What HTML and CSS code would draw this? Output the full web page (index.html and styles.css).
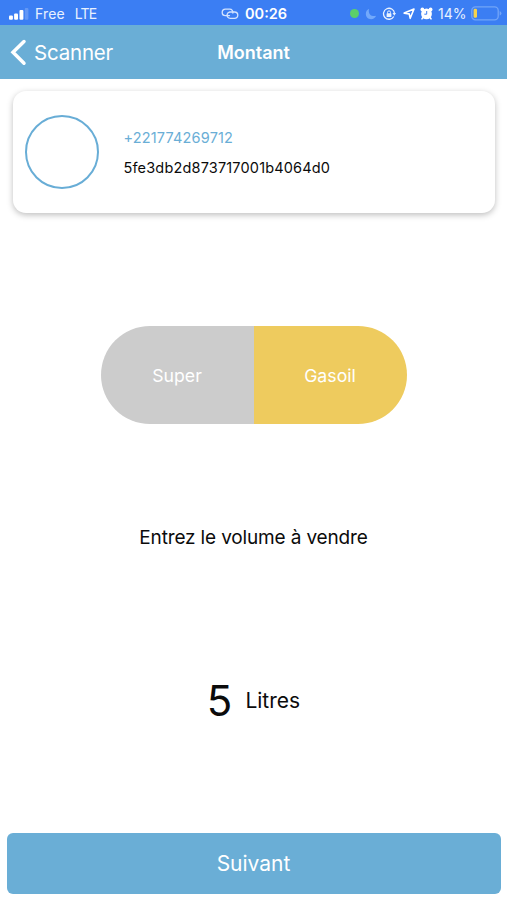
FILE: index.html
```html
<!DOCTYPE html>
<html lang="fr">
<head>
<meta charset="utf-8">
<title>Montant</title>
<link rel="stylesheet" href="styles.css">
</head>
<body>
<div class="screen">
  <div class="status">
    <div class="status-left">
      <svg class="signal" width="21" height="14" viewBox="0 0 21 14" fill="#fff"><rect x="1" y="8.500" width="3.900" height="4.200" rx="1"/><rect x="6.100" y="6.500" width="3.900" height="6.200" rx="1"/><rect x="11.500" y="3" width="3.900" height="9.700" rx="1"/><rect x="16.800" y="1" width="3.600" height="11.700" rx="1" opacity=".2"/></svg>
      <span class="carrier">Free</span><span class="network">LTE</span>
    </div>
    <div class="status-mid">
      <svg width="18" height="12" viewBox="0 0 18 12" fill="none" stroke="#d2e3ff" stroke-width="1.300" stroke-linecap="round"><path d="M8.500 7.600H4.400A3.200 3.200 0 0 1 4.400 1.200H8.800A3.200 3.200 0 0 1 11.900 5"/><path d="M9.500 4H13.600A3.200 3.200 0 0 1 13.600 10.400H9.200A3.200 3.200 0 0 1 6.100 6.500Q6.600 4.300 8.800 4"/></svg>
      <span class="time">00:26</span>
    </div>
    <div class="status-right">
      <span class="dot"></span>
      <svg class="moon" width="12" height="12" viewBox="0 0 12 12"><path d="M4.100.8C-.2 2.600-.2 9 3.800 10.800c3 1.300 6.100-.1 7.300-3C6.500 9.200 2.600 5.700 4.100.8Z" fill="#72a9fb"/></svg>
      <svg class="lock" width="14" height="14" viewBox="0 0 14 14" fill="none" stroke="#eaf3ff" stroke-width="1.300"><path d="M11.800 9.500A5.500 5.500 0 1 1 12.500 6.200"/><path d="M10.500 6.100h3.500L12.300 8.700Z" fill="#eaf3ff" stroke="none"/><rect x="4.600" y="6.300" width="4.800" height="3.700" rx=".6" fill="#eaf3ff" stroke="none"/><path d="M5.500 6.500V5.400a1.500 1.500 0 0 1 3 0v1.100" stroke-width="1"/></svg>
      <svg class="arrow" width="12" height="12" viewBox="0 0 12 12" fill="none" stroke="#fff" stroke-width="1.600" stroke-linejoin="round"><path d="M11 1 7.200 10.300 6.200 5.900 1.200 5.100Z"/></svg>
      <svg class="alarm" width="13" height="13" viewBox="0 0 13 13"><circle cx="2.400" cy="2.500" r="1.900" fill="#fff"/><circle cx="10.600" cy="2.500" r="1.900" fill="#fff"/><path d="m3 10.500-1 1.300M10 10.500l1 1.300" stroke="#fff" stroke-width="1.600" stroke-linecap="round"/><circle cx="6.500" cy="6.900" r="5.400" fill="#fff"/><path d="M6.700 4V7.200H4.300" fill="none" stroke="#3d7ff3" stroke-width="1"/></svg>
      <span class="percent">14%</span>
      <svg class="battery" width="31" height="15" viewBox="0 0 31 15"><rect x=".8" y=".8" width="26.400" height="13" rx="3.600" fill="none" stroke="#72a5f8" stroke-width="1.300"/><path d="M28.700 5v4.600q1.700-.7 1.700-2.300T28.700 5Z" fill="#72a5f8"/><rect x="2.600" y="2.800" width="3.400" height="9" rx="1.300" fill="#f6d34c"/></svg>
    </div>
  </div>
  <header class="nav">
    <div class="back">
      <svg width="17" height="27" viewBox="0 0 17 27" fill="none" stroke="#fff" stroke-width="3.500" stroke-linecap="round" stroke-linejoin="miter"><path d="M14 2.500 3 13.300 14 24.200"/></svg>
      <span>Scanner</span>
    </div>
    <h1>Montant</h1>
  </header>
  <main>
    <section class="card">
      <div class="avatar"></div>
      <div class="info">
        <span class="phone">+221774269712</span>
        <span class="ident">5fe3db2d873717001b4064d0</span>
      </div>
    </section>
    <div class="toggle">
      <div class="option"><span>Super</span></div>
      <div class="option active"><span>Gasoil</span></div>
    </div>
    <p class="prompt"><span>Entrez le volume à vendre</span></p>
    <div class="amount"><span class="value">5</span><span class="unit">Litres</span></div>
  </main>
  <div class="next"><span>Suivant</span></div>
</div>
</body>
</html>
```
FILE: styles.css
```css
* { box-sizing: border-box; }
body { margin: 0; background: #fff; color: #0b0b0b; font-family: Inter, "Liberation Sans", sans-serif; }
svg { display: block; flex: none; }
span { white-space: nowrap; }
.screen { width: 507px; height: 900px; display: flex; flex-direction: column; overflow: hidden; }
.status { height: 25px; background: #3b7ef3; color: #e8f1ff; display: grid; grid-template-columns: 221px 1fr 158px; align-items: center; padding-top: 2px; line-height: 18px; }
.status-left, .status-mid, .status-right { display: flex; align-items: center; }
.status-left { padding-left: 8px; font-size: 14px; }
.carrier { margin-left: 6px; letter-spacing: .15px; }
.network { margin-left: 10px; letter-spacing: -.8px; }
.time { margin-left: 6px; font-size: 14.500px; font-weight: 600; color: #fff; }
.dot { width: 9px; height: 9px; border-radius: 50%; background: #5bd06a; margin-left: 1px; }
.moon { margin-left: 6px; }
.lock { margin-left: 5px; }
.arrow { margin-left: 7px; }
.alarm { margin-left: 5px; }
.percent { font-size: 14px; margin-left: 5px; }
.battery { margin-left: 4px; }
.nav { height: 54px; background: #6aaed6; color: #fff; display: grid; grid-template-columns: 1fr auto 1fr; align-items: center; }
.back { display: flex; align-items: center; padding-left: 10px; gap: 7px; font-size: 20.500px; letter-spacing: -.2px; }
h1 { margin: 0; font-size: 18px; font-weight: 600; }
main { flex: 1; display: flex; flex-direction: column; align-items: center; }
.card { width: 482px; height: 122px; margin-top: 12px; border-radius: 13px; background: #fff; box-shadow: 0 2px 6px rgba(0,0,0,.26); display: flex; align-items: center; padding-left: 12px; }
.avatar { width: 74px; height: 74px; border: 2px solid #68add6; border-radius: 50%; }
.info { margin: 2px 0 0 25px; display: flex; flex-direction: column; gap: 10px; font-size: 14.500px; line-height: 20px; letter-spacing: .17px; }
.phone { color: #6aaed6; }
.toggle { width: 306px; height: 98px; margin-top: 113px; border-radius: 49px; overflow: hidden; display: grid; grid-template-columns: 1fr 1fr; color: #fff; font-size: 17.700px; }
.option { background: #ccc; display: flex; align-items: center; justify-content: center; }
.active { background: #eecb5e; }
.prompt { margin: 100px 0 0; font-size: 19px; line-height: 28px; letter-spacing: -.15px; }
.amount { margin-top: 119px; height: 60px; display: flex; align-items: center; gap: 13px; line-height: 60px; }
.value { font-size: 42px; }
.unit { font-size: 21px; }
.next { width: 494px; height: 61px; margin: 0 auto 6px; border-radius: 6px; background: #6aaed6; color: #fff; display: flex; align-items: center; justify-content: center; font-size: 21px; }
```
